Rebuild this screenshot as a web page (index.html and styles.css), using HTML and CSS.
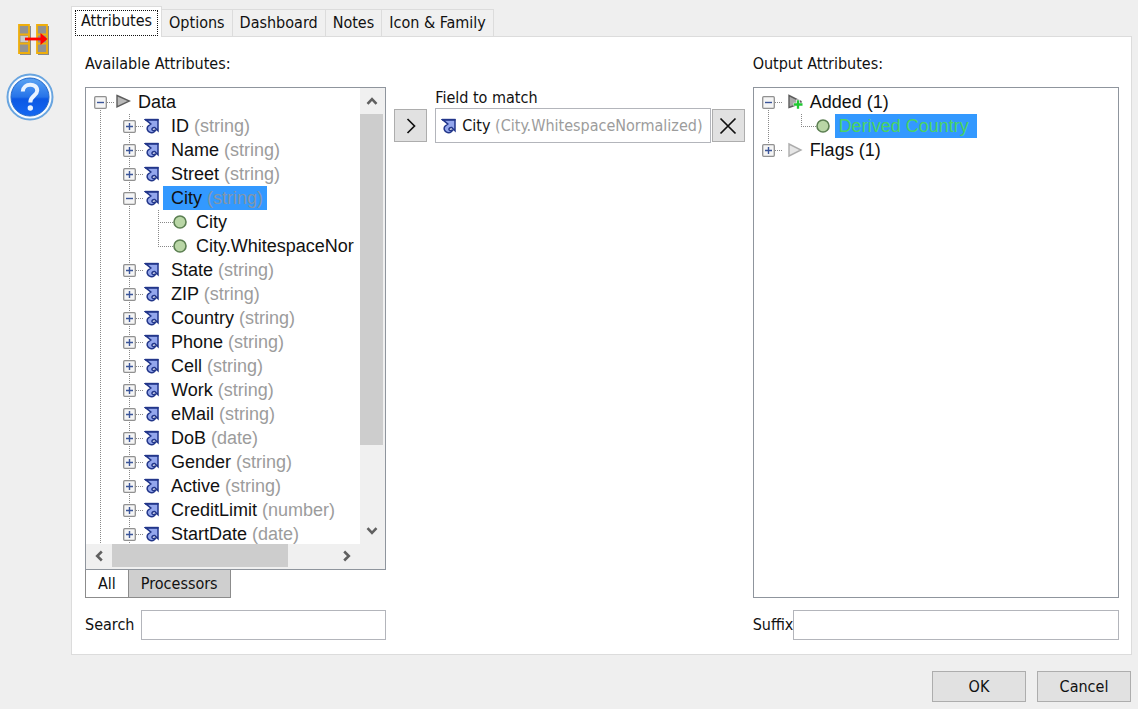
FILE: index.html
```html
<!DOCTYPE html>
<html lang="en">
<head>
<meta charset="utf-8">
<title>Match configuration</title>
<link rel="stylesheet" href="styles.css">
</head>
<body>
<svg class="defs" aria-hidden="true">
  <symbol id="arrow" viewBox="0 0 16 16">
    <path d="M2 1.500H14V12.500L10.500 9.500L8 10.800L9 12.500L11.500 12L9 14.800H6L3.500 12.500L3.200 9L6 6.200L2 2Z" fill="#93a6ec"/>
    <path d="M1.500 1.700H14V12.800L10.700 9.500C8.500 9.300 7.500 11 8.300 12C9 12.800 10 12.700 11.800 12C10.500 14.500 8.500 15 6.500 14.600C3 13.800 2.500 10 4 8.200L6.800 6Z" fill="none" stroke="#22368a" stroke-width="1.500"/>
    <path d="M1 1.700H14.500" stroke="#22368a" stroke-width="1.800"/>
  </symbol>
  <symbol id="leaf" viewBox="0 0 16 16"><circle cx="7" cy="8" r="6" fill="#b9d6a6" stroke="#5c7f52" stroke-width="1.600"/></symbol>
  <symbol id="tri" viewBox="0 0 16 16"><path d="M2 1.500L14.500 7L2 12.800Z" fill="#b9b9b9" stroke="#5d5d5d" stroke-width="1.400"/></symbol>
  <symbol id="tri-light" viewBox="0 0 16 16"><path d="M2 2L14 8L2 14Z" fill="#e6e6e6" stroke="#adadad" stroke-width="1.400"/></symbol>
  <symbol id="tri-add" viewBox="0 0 16 16"><path d="M2 1.500L14 7.500V11H9L2 13.500Z" fill="#a9a9a9" stroke="#5d5d5d" stroke-width="1.400"/><path d="M11 5.500V15M6.500 10.500H16" stroke="#fff" stroke-width="3.600"/><path d="M11 6.200V14.800M6.800 10.500H15.500" stroke="#20c832" stroke-width="2.300"/></symbol>
  <symbol id="plus" viewBox="0 0 13 13"><rect x=".7" y=".7" width="11.600" height="11.600" rx="1" fill="#f5f5f5" stroke="#919191" stroke-width="1.300"/><path d="M3 6.500H10M6.500 3V10" stroke="#3b5599" stroke-width="1.400"/></symbol>
  <symbol id="minus" viewBox="0 0 13 13"><rect x=".7" y=".7" width="11.600" height="11.600" rx="1" fill="#f5f5f5" stroke="#919191" stroke-width="1.300"/><path d="M3 6.500H10" stroke="#3b5599" stroke-width="1.400"/></symbol>
  <symbol id="chev" viewBox="0 0 12 12"><path d="M1.500 8.800L6 4.200L10.500 8.800" fill="none" stroke="#606060" stroke-width="2.600"/></symbol>
</svg>

<main class="window">
  <aside class="rail">
    <svg class="rail-match" viewBox="0 0 32 32" role="img" aria-label="Match">
      <g fill="#8a8a88"><path d="M2 2H13V31H2ZM20 2H31V31H20Z"/></g>
      <g fill="#929292" stroke="#efae0c" stroke-width="1.800">
        <path d="M1 1H11V29H1ZM19 1H29V29H19Z"/>
        <path d="M1 10.500H11M1 19.500H11M19 10.500H29M19 19.500H29"/>
      </g>
      <rect x="2.500" y="12" width="7.500" height="6" fill="#cbcbcb"/>
      <path d="M7 15H25" stroke="#f00" stroke-width="2.800"/><path d="M22.500 9L29.500 15L22.500 21Z" fill="#f00"/>
    </svg>
    <button class="help" type="button" aria-label="Help">
      <svg viewBox="0 0 48 48">
        <defs><linearGradient id="blue" x1="0" y1="0" x2="0" y2="1"><stop offset="0" stop-color="#5ba4f3"/><stop offset=".5" stop-color="#2673e9"/><stop offset=".55" stop-color="#0c58e4"/><stop offset="1" stop-color="#1468f2"/></linearGradient></defs>
        <circle cx="24" cy="24" r="22.500" fill="#f7fbff" stroke="#69a5e0" stroke-width="2"/>
        <circle cx="24" cy="24" r="19" fill="url(#blue)" stroke="#2267c8" stroke-width="1"/>
        <path d="M16.800 18.500C17 9.500 31.500 9.500 31.200 17.800C31 23 24.300 22.500 24.300 29.500" fill="none" stroke="#e9f3ff" stroke-width="4"/>
        <circle cx="24.300" cy="35" r="2.700" fill="#e9f3ff"/>
      </svg>
    </button>
  </aside>

  <section class="notebook">
    <nav class="tabs" role="tablist">
      <button class="tab tab-on" type="button" role="tab" aria-selected="true"><span>Attributes</span></button>
      <button class="tab" type="button" role="tab">Options</button>
      <button class="tab" type="button" role="tab">Dashboard</button>
      <button class="tab" type="button" role="tab">Notes</button>
      <button class="tab" type="button" role="tab">Icon &amp; Family</button>
    </nav>

    <div class="page">
      <section class="column">
        <h2 class="heading">Available Attributes:</h2>
        <div class="frame">
          <div class="scroller">
            <ul class="tree">
              <li class="row"><i class="cell down"><button class="toggle" type="button" aria-label="Collapse Data"><svg><use href="#minus"/></svg></button></i><svg class="ico"><use href="#tri"/></svg><span class="name">Data</span></li>
              <li class="row"><i class="cell line"></i><i class="cell line"><button class="toggle" type="button" aria-label="Expand ID"><svg><use href="#plus"/></svg></button></i><svg class="ico"><use href="#arrow"/></svg><span class="name wide">ID <small>(string)</small></span></li>
              <li class="row"><i class="cell line"></i><i class="cell line"><button class="toggle" type="button" aria-label="Expand Name"><svg><use href="#plus"/></svg></button></i><svg class="ico"><use href="#arrow"/></svg><span class="name wide">Name <small>(string)</small></span></li>
              <li class="row"><i class="cell line"></i><i class="cell line"><button class="toggle" type="button" aria-label="Expand Street"><svg><use href="#plus"/></svg></button></i><svg class="ico"><use href="#arrow"/></svg><span class="name wide">Street <small>(string)</small></span></li>
              <li class="row"><i class="cell line"></i><i class="cell line"><button class="toggle" type="button" aria-label="Collapse City"><svg><use href="#minus"/></svg></button></i><svg class="ico"><use href="#arrow"/></svg><span class="name wide picked">City <small>(string)</small></span></li>
              <li class="row"><i class="cell line"></i><i class="cell line"></i><i class="cell line branch"></i><svg class="ico"><use href="#leaf"/></svg><span class="name">City</span></li>
              <li class="row"><i class="cell line"></i><i class="cell line"></i><i class="cell up branch"></i><svg class="ico"><use href="#leaf"/></svg><span class="name">City.WhitespaceNor</span></li>
              <li class="row"><i class="cell line"></i><i class="cell line"><button class="toggle" type="button" aria-label="Expand State"><svg><use href="#plus"/></svg></button></i><svg class="ico"><use href="#arrow"/></svg><span class="name wide">State <small>(string)</small></span></li>
              <li class="row"><i class="cell line"></i><i class="cell line"><button class="toggle" type="button" aria-label="Expand ZIP"><svg><use href="#plus"/></svg></button></i><svg class="ico"><use href="#arrow"/></svg><span class="name wide">ZIP <small>(string)</small></span></li>
              <li class="row"><i class="cell line"></i><i class="cell line"><button class="toggle" type="button" aria-label="Expand Country"><svg><use href="#plus"/></svg></button></i><svg class="ico"><use href="#arrow"/></svg><span class="name wide">Country <small>(string)</small></span></li>
              <li class="row"><i class="cell line"></i><i class="cell line"><button class="toggle" type="button" aria-label="Expand Phone"><svg><use href="#plus"/></svg></button></i><svg class="ico"><use href="#arrow"/></svg><span class="name wide">Phone <small>(string)</small></span></li>
              <li class="row"><i class="cell line"></i><i class="cell line"><button class="toggle" type="button" aria-label="Expand Cell"><svg><use href="#plus"/></svg></button></i><svg class="ico"><use href="#arrow"/></svg><span class="name wide">Cell <small>(string)</small></span></li>
              <li class="row"><i class="cell line"></i><i class="cell line"><button class="toggle" type="button" aria-label="Expand Work"><svg><use href="#plus"/></svg></button></i><svg class="ico"><use href="#arrow"/></svg><span class="name wide">Work <small>(string)</small></span></li>
              <li class="row"><i class="cell line"></i><i class="cell line"><button class="toggle" type="button" aria-label="Expand eMail"><svg><use href="#plus"/></svg></button></i><svg class="ico"><use href="#arrow"/></svg><span class="name wide">eMail <small>(string)</small></span></li>
              <li class="row"><i class="cell line"></i><i class="cell line"><button class="toggle" type="button" aria-label="Expand DoB"><svg><use href="#plus"/></svg></button></i><svg class="ico"><use href="#arrow"/></svg><span class="name wide">DoB <small>(date)</small></span></li>
              <li class="row"><i class="cell line"></i><i class="cell line"><button class="toggle" type="button" aria-label="Expand Gender"><svg><use href="#plus"/></svg></button></i><svg class="ico"><use href="#arrow"/></svg><span class="name wide">Gender <small>(string)</small></span></li>
              <li class="row"><i class="cell line"></i><i class="cell line"><button class="toggle" type="button" aria-label="Expand Active"><svg><use href="#plus"/></svg></button></i><svg class="ico"><use href="#arrow"/></svg><span class="name wide">Active <small>(string)</small></span></li>
              <li class="row"><i class="cell line"></i><i class="cell line"><button class="toggle" type="button" aria-label="Expand CreditLimit"><svg><use href="#plus"/></svg></button></i><svg class="ico"><use href="#arrow"/></svg><span class="name wide">CreditLimit <small>(number)</small></span></li>
              <li class="row"><i class="cell line"></i><i class="cell line"><button class="toggle" type="button" aria-label="Expand StartDate"><svg><use href="#plus"/></svg></button></i><svg class="ico"><use href="#arrow"/></svg><span class="name wide">StartDate <small>(date)</small></span></li>
            </ul>
            <div class="vbar">
              <button class="step" type="button" aria-label="Scroll up"><svg><use href="#chev"/></svg></button>
              <div class="track"><div class="thumb"></div></div>
              <button class="step" type="button" aria-label="Scroll down"><svg class="turn-down"><use href="#chev"/></svg></button>
            </div>
            <div class="hbar">
              <button class="step" type="button" aria-label="Scroll left"><svg class="turn-left"><use href="#chev"/></svg></button>
              <div class="track"><div class="thumb"></div></div>
              <button class="step" type="button" aria-label="Scroll right"><svg class="turn-right"><use href="#chev"/></svg></button>
            </div>
          </div>
        </div>
        <div class="filters">
          <button class="filter filter-on" type="button">All</button>
          <button class="filter" type="button">Processors</button>
        </div>
        <div class="field field-search"><label for="search">Search</label><input id="search" type="text"></div>
      </section>

      <section class="picker">
        <button class="square" type="button" aria-label="Add field"><svg viewBox="0 0 20 20"><path d="M6.500 3L13.500 10L6.500 17" fill="none" stroke="#111" stroke-width="1.700"/></svg></button>
        <div class="match">
          <h3 class="match-title">Field to match</h3>
          <div class="match-box"><svg class="ico"><use href="#arrow"/></svg><span>City <small>(City.WhitespaceNormalized)</small></span></div>
        </div>
        <button class="square" type="button" aria-label="Remove field"><svg viewBox="0 0 20 20"><path d="M2.500 2.500L17.500 17.500M17.500 2.500L2.500 17.500" fill="none" stroke="#111" stroke-width="1.700"/></svg></button>
      </section>

      <section class="column">
        <h2 class="heading">Output Attributes:</h2>
        <div class="frame">
          <ul class="tree">
            <li class="row"><i class="cell down"><button class="toggle" type="button" aria-label="Collapse Added"><svg><use href="#minus"/></svg></button></i><svg class="ico shift"><use href="#tri-add"/></svg><span class="name">Added (1)</span></li>
            <li class="row"><i class="cell line"></i><i class="cell up branch shift"></i><svg class="ico"><use href="#leaf"/></svg><span class="name picked added">Derived Country</span></li>
            <li class="row"><i class="cell up"><button class="toggle" type="button" aria-label="Expand Flags"><svg><use href="#plus"/></svg></button></i><svg class="ico shift"><use href="#tri-light"/></svg><span class="name">Flags (1)</span></li>
          </ul>
        </div>
        <div class="field"><label for="suffix">Suffix</label><input id="suffix" type="text"></div>
      </section>
    </div>
  </section>
</main>

<footer class="actions">
  <button class="action" type="button">OK</button>
  <button class="action" type="button">Cancel</button>
</footer>
</body>
</html>
```
FILE: styles.css
```css
* { box-sizing: border-box; }

body {
  margin: 0;
  min-height: 100vh;
  display: flex;
  flex-direction: column;
  background: #efefef;
  color: #111;
  font: 16px/20px "DejaVu Sans Condensed", Tahoma, sans-serif;
}

button, input { font: inherit; color: inherit; border-radius: 0; }
button { padding: 0; }
small { font-size: inherit; color: #9c9c9c; }
.defs { display: none; }

.window { flex: 1; display: flex; padding: 6px 6px 0 0; }

.rail {
  flex: none;
  width: 71px;
  padding: 18px 0 0 6px;
  display: flex;
  flex-direction: column;
  gap: 17px;
}
.rail-match { width: 32px; height: 32px; margin-left: 12px; }
.help { width: 48px; height: 48px; border: 0; background: none; }
.help svg { display: block; width: 48px; height: 48px; }

.notebook { flex: 1; min-width: 0; display: flex; flex-direction: column; }
.tabs { display: flex; align-items: flex-end; height: 31px; }
.tab {
  height: 28px;
  padding: 0 7px;
  border: 1px solid #dcdcdc;
  border-left: 0;
  background: #f0f0f0;
}
.tab-on {
  height: 31px;
  padding: 3px;
  border-left: 1px solid #dcdcdc;
  border-bottom: 0;
  background: #fff;
  z-index: 1;
}
.tab-on span { display: block; height: 26px; padding: 0 5px; border: 1px dotted #111; }

.page {
  flex: 1;
  display: grid;
  grid-template-columns: 301fr 350fr 366fr;
  gap: 8px;
  padding: 17px 12px 14px 13px;
  margin-top: -1px;
  border: 1px solid #dcdcdc;
  background: #fff;
}
.column { min-width: 0; display: flex; flex-direction: column; }
.heading { margin: 0 0 13px; font-size: 16px; font-weight: 400; line-height: 20px; }

.frame { flex: 1 0 240px; display: grid; border: 1px solid #8f959d; overflow: hidden; }
.scroller {
  display: grid;
  grid-template-columns: 1fr 25px;
  grid-template-rows: 1fr 25px;
  background: #f0f0f0;
}

.tree {
  margin: 0;
  padding: 2px 0 0;
  list-style: none;
  min-width: 0;
  height: 0;
  min-height: 100%;
  overflow: hidden;
  background: #fff;
  font: 18px/24px "Liberation Sans", Arial, sans-serif;
}
.row { display: flex; align-items: center; height: 24px; white-space: nowrap; }
.cell {
  flex: none;
  width: 29px;
  height: 24px;
  display: flex;
  align-items: center;
  justify-content: center;
  background-repeat: no-repeat;
}
.line, .down, .up {
  background-image: repeating-linear-gradient(#888 0 1px, #fff 1px 2px);
  background-size: 1px 24px;
  background-position: 14px 0;
}
.down { background-size: 1px 12px; background-position: 14px 12px; }
.up { background-size: 1px 12px; }
.cell:has(.toggle)::after {
  content: "";
  width: 8px;
  height: 1px;
  margin-right: -8px;
  background: repeating-linear-gradient(90deg, #888 0 1px, #fff 1px 2px);
}
.branch::after {
  content: "";
  width: 15px;
  height: 1px;
  margin-left: auto;
  background: repeating-linear-gradient(90deg, #888 0 1px, #fff 1px 2px);
}
.toggle { width: 13px; height: 13px; border: 0; background: none; }
.toggle svg { display: block; width: 13px; height: 13px; }
.ico { flex: none; width: 16px; height: 16px; }
.name { margin-left: 3px; padding: 0 4px; }
.wide { padding-left: 8px; }
.shift { margin-left: 4px; }
.picked { background: #3399ff; }
.picked small { color: #8396a9; }
.added { padding-right: 8px; color: #4bd463; }

.vbar { display: flex; flex-direction: column; padding-right: 2px; }
.hbar { display: flex; padding-bottom: 2px; }
.step {
  flex: none;
  width: 26px;
  height: 26px;
  display: grid;
  place-items: center;
  border: 0;
  background: none;
}
.vbar .step { width: 23px; }
.hbar .step { height: 23px; }
.step svg { width: 12px; height: 12px; }
.turn-down { transform: rotate(180deg); }
.turn-left { transform: rotate(-90deg); }
.turn-right { transform: rotate(90deg); }
.track { flex: 1; }
.thumb { background: #cdcdcd; }
.vbar .thumb { height: 82%; }
.hbar .thumb { width: 79%; height: 100%; }

.filters { display: flex; }
.filter {
  height: 28px;
  padding: 0 12px;
  border: 1px solid #8c8c8c;
  border-top: 0;
  border-left: 0;
  background: #cfcfcf;
}
.filter-on { border-left: 1px solid #8c8c8c; background: #fff; }

.field { display: flex; align-items: center; margin-top: 12px; }
.field input {
  flex: 1;
  min-width: 0;
  height: 30px;
  padding: 0 4px;
  border: 1px solid #b3b5bb;
  background: #fff;
}
.field-search { gap: 7px; }

.picker { display: flex; align-items: flex-end; align-self: start; padding-top: 34px; min-width: 0; }
.square {
  flex: none;
  width: 33px;
  height: 33px;
  display: grid;
  place-items: center;
  margin-bottom: 1px;
  border: 1px solid #adadad;
  background: #e1e1e1;
}
.square svg { width: 20px; height: 20px; }
.match { flex: 1; min-width: 0; margin: 0 1px 0 8px; }
.match-title { margin: 0; font-size: 16px; font-weight: 400; line-height: 20px; }
.match-box {
  display: flex;
  align-items: center;
  gap: 5px;
  height: 35px;
  padding-left: 5px;
  border: 1px solid #b3b5bb;
  white-space: nowrap;
}

.actions { display: flex; justify-content: flex-end; gap: 11px; padding: 16px 7px 7px; }
.action { width: 94px; height: 31px; border: 1px solid #adadad; background: #e1e1e1; }
```
